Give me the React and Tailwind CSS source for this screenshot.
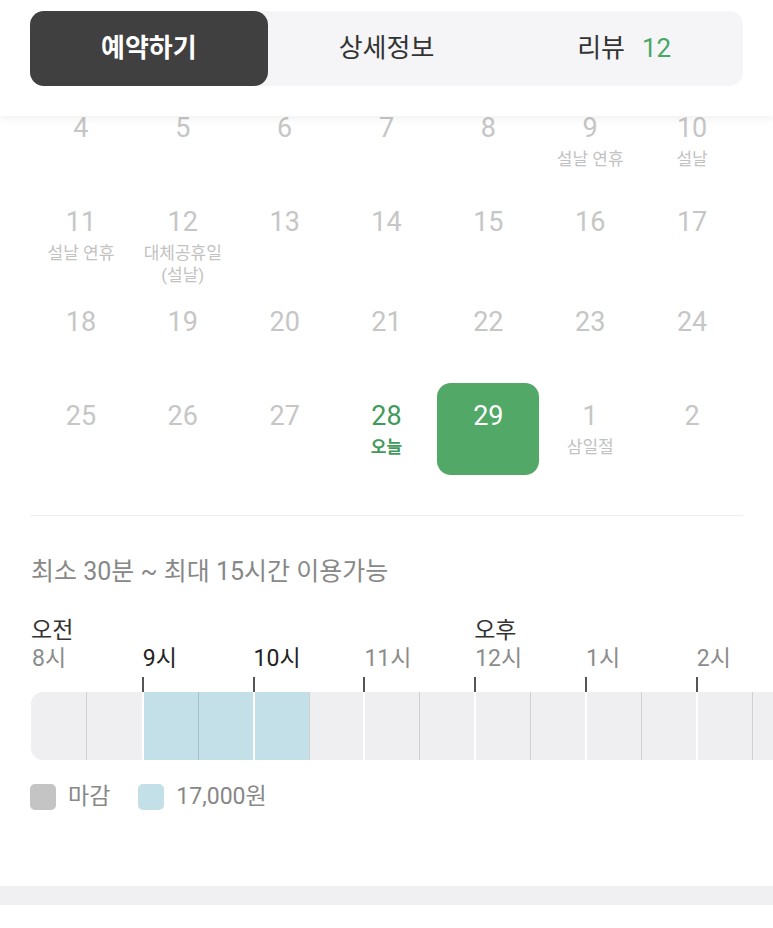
import React from 'react';

const weeks = [
  [
    { d: 4 }, { d: 5 }, { d: 6 }, { d: 7 }, { d: 8 },
    { d: 9, label: ['설날 연휴'] }, { d: 10, label: ['설날'] },
  ],
  [
    { d: 11, label: ['설날 연휴'] }, { d: 12, label: ['대체공휴일', '(설날)'] },
    { d: 13 }, { d: 14 }, { d: 15 }, { d: 16 }, { d: 17 },
  ],
  [{ d: 18 }, { d: 19 }, { d: 20 }, { d: 21 }, { d: 22 }, { d: 23 }, { d: 24 }],
  [
    { d: 25 }, { d: 26 }, { d: 27 }, { d: 28, today: true, label: ['오늘'] },
    { d: 29, selected: true }, { d: 1, label: ['삼일절'] }, { d: 2 },
  ],
];

// the last column only carries the bar that runs past the right edge
const hours = [8, 9, 10, 11, 12, 13, 14, 15];
const booked = ['9-0', '9-1', '10-0'];

const DayCell = ({ day }) => {
  if (day.selected) {
    return (
      <div className="flex flex-col items-center min-h-[92px] pt-[18px] rounded-[14px] bg-[#52a866]">
        <span className="text-[27px] leading-[30px] text-white">{day.d}</span>
      </div>
    );
  }
  return (
    <div className="flex flex-col items-center min-h-[92px] pt-[18px] pb-[1px]">
      <span className={`text-[27px] leading-[30px] ${day.today ? 'text-[#3f9a5b]' : 'text-[#c6c6c6]'}`}>
        {day.d}
      </span>
      {day.label && (
        <div className={`mt-[5px] text-[17px] leading-[22px] text-center whitespace-nowrap ${day.today ? 'text-[#3f9a5b] font-bold' : 'text-[#c2c2c2]'}`}>
          {day.label.map((l) => (
            <div key={l}>{l}</div>
          ))}
        </div>
      )}
    </div>
  );
};

const HourColumn = ({ h, first, last }) => {
  const period = h === 8 ? '오전' : h === 12 ? '오후' : '';
  const label = h > 12 ? h - 12 : h;
  const active = h === 9 || h === 10;

  return (
    <div className="w-[110.8px] shrink-0 flex flex-col">
      <div className="h-[28px] text-[23px] leading-[28px] text-[#333] whitespace-nowrap">{period}</div>
      <div className={`h-[28px] pl-[1px] text-[23px] leading-[28px] whitespace-nowrap ${active ? 'text-[#222]' : 'text-[#8c8c8c]'}`}>
        {!last && `${label}시`}
      </div>
      <div className="h-[19px] flex items-end">
        {!first && !last && <div className="w-[2px] h-[15px] bg-[#555]" />}
      </div>
      <div className="h-[68px] flex">
        {[0, 1].map((half) => {
          const isBooked = booked.includes(`${h}-${half}`);
          const bg = isBooked ? 'bg-[#c3dfe8]' : 'bg-[#efeff1]';
          let edge = '';
          if (half === 0) edge = first ? 'rounded-l-[12px]' : 'border-l-2 border-white';
          else edge = 'border-l-[1.5px] border-black/[0.13]';
          return <div key={half} className={`flex-1 ${bg} ${edge}`} />;
        })}
      </div>
    </div>
  );
};

const App = () => {
  return (
    <div className="w-[773px] h-[928px] overflow-hidden bg-white font-['Roboto','Noto_Sans_CJK_KR',sans-serif]">
      <div className="relative z-10 h-[116px] bg-white px-[30px] pt-[11px] shadow-[0_3px_8px_rgba(0,0,0,0.06)]">
        <div className="flex h-[75px] rounded-[14px] bg-[#f5f5f7]">
          <div className="flex-1 flex items-center justify-center rounded-[14px] bg-[#404040] text-white text-[26px] font-bold">
            예약하기
          </div>
          <div className="flex-1 flex items-center justify-center text-[26px] font-normal text-[#333]">
            상세정보
          </div>
          <div className="flex-1 flex items-center justify-center gap-[17px] text-[26px] font-normal text-[#333]">
            <span>리뷰</span>
            <span className="text-[#47a764]">12</span>
          </div>
        </div>
      </div>

      <div className="-mt-[21px] px-[30px] grid grid-cols-7 gap-y-[2px]">
        {weeks.flat().map((day, i) => (
          <DayCell key={i} day={day} />
        ))}
      </div>

      <div className="mx-[30px] mt-[40px] border-t border-[#eeeeee]" />

      <div className="px-[31px] mt-[42px] text-[25px] leading-[28px] text-[#888]">
        최소 30분 ~ 최대 15시간 이용가능
      </div>

      <div className="mt-[31px] pl-[31px] overflow-hidden">
        <div className="flex">
          {hours.map((h, i) => (
            <HourColumn key={h} h={h} first={i === 0} last={i === hours.length - 1} />
          ))}
        </div>
      </div>

      <div className="px-[30px] mt-[23px] flex items-center">
        <div className="w-[26px] h-[26px] rounded-[5px] bg-[#c4c4c4]" />
        <span className="ml-[12px] text-[23px] leading-[28px] text-[#888]">마감</span>
        <div className="ml-[28px] w-[26px] h-[26px] rounded-[5px] bg-[#c3dfe8]" />
        <span className="ml-[12px] text-[23px] leading-[28px] text-[#888]">17,000원</span>
      </div>

      <div className="mt-[75px] h-[19px] bg-[#f0f0f2]" />
    </div>
  );
};

export default App;
